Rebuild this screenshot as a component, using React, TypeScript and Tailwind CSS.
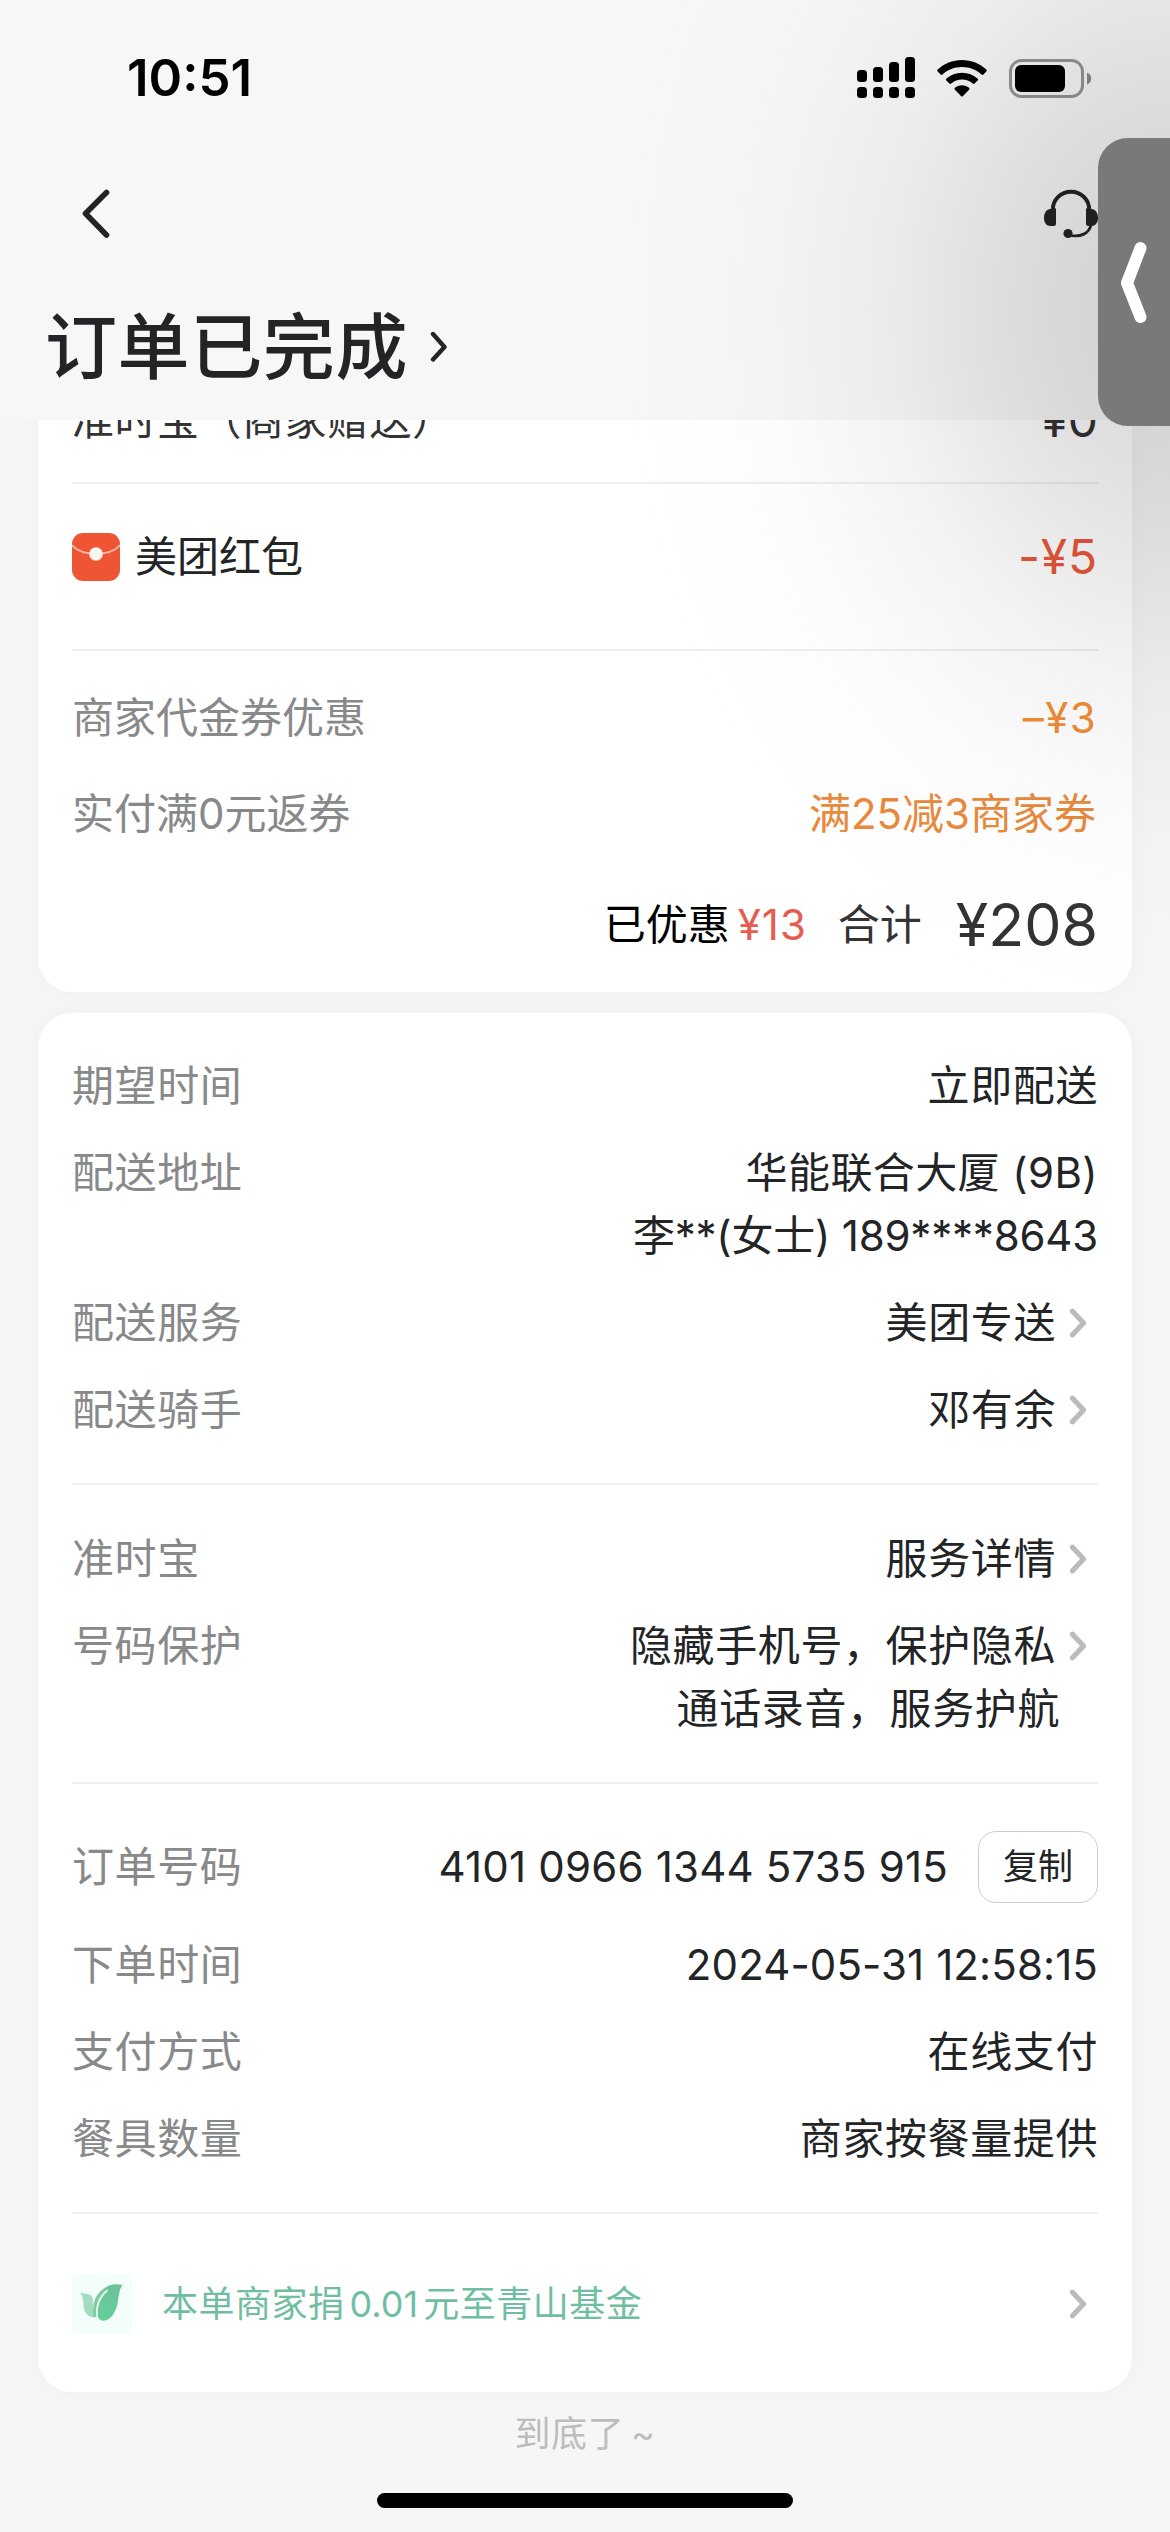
/**
 * @page OrderDetail
 * Completed takeaway order: price summary, delivery info and order info.
 */

import React from 'react';

const Chevron: React.FC<{ className?: string }> = ({ className }) => (
  <svg className={className} width="18" height="30" viewBox="0 0 18 30" fill="none">
    <path d="M3.500 3.200 L14.500 15 L3.500 26.800" stroke="currentColor" strokeWidth="5.200" strokeLinecap="round" strokeLinejoin="round" />
  </svg>
);

const SignalIcon = () => (
  <svg width="58" height="42" viewBox="0 0 58 42" fill="black">
    <rect x="0" y="13" width="10" height="12" rx="3.5" />
    <rect x="16" y="10" width="10" height="15" rx="3.5" />
    <rect x="32" y="5" width="10" height="20" rx="3.5" />
    <rect x="48" y="0" width="10" height="25" rx="3.5" />
    <rect x="0" y="30" width="10" height="11" rx="3.5" />
    <rect x="16" y="30" width="10" height="11" rx="3.5" />
    <rect x="32" y="30" width="10" height="11" rx="3.5" />
    <rect x="48" y="30" width="10" height="11" rx="3.5" />
  </svg>
);

const WifiIcon = () => (
  <svg width="50" height="37" viewBox="0 0 50 37" fill="black">
    <path d="M25 0 C15.5 0 7 3.6 0.7 9.6 Q-0.2 10.5 0.7 11.5 L3.6 14.5 Q4.5 15.4 5.5 14.5 C10.7 9.7 17.5 7 25 7 C32.5 7 39.3 9.7 44.5 14.5 Q45.5 15.4 46.4 14.5 L49.3 11.5 Q50.2 10.5 49.3 9.6 C43 3.6 34.5 0 25 0 Z" />
    <path d="M25 12.7 C19 12.7 13.5 14.9 9.3 18.7 Q8.4 19.6 9.3 20.5 L12.4 23.5 Q13.3 24.4 14.3 23.5 C17.2 21 20.9 19.6 25 19.6 C29.1 19.6 32.8 21 35.7 23.5 Q36.7 24.4 37.6 23.5 L40.7 20.5 Q41.6 19.6 40.7 18.7 C36.5 14.9 31 12.7 25 12.7 Z" />
    <path d="M25 25.3 C22.3 25.3 19.8 26.2 17.9 27.8 Q16.9 28.7 17.9 29.7 L24 36 Q25 37 26 36 L32.1 29.7 Q33.1 28.7 32.1 27.8 C30.2 26.2 27.7 25.3 25 25.3 Z" />
  </svg>
);

const BatteryIcon = () => (
  <svg width="83" height="39" viewBox="0 0 83 39" fill="none">
    <rect x="1.500" y="1.500" width="72" height="36" rx="11" stroke="black" strokeOpacity="0.400" strokeWidth="3" />
    <rect x="6" y="6" width="50" height="27" rx="6" fill="black" />
    <path d="M78 13.500 C80.600 14.500 82.200 16.800 82.200 19.500 C82.200 22.200 80.600 24.500 78 25.500 Z" fill="black" fillOpacity="0.450" />
  </svg>
);

const HeadsetIcon = () => (
  <svg width="54" height="50" viewBox="0 0 54 50" fill="none">
    <path d="M8.800 21 C8.800 10.500 17 2.700 27 2.700 C37 2.700 45.200 10.500 45.200 21" stroke="#222426" strokeWidth="4" />
    <path d="M12 19.500 V34.500 Q12 37 9.500 37 H6.500 C2.500 37 0 33.500 0 29 C0 24 2.500 20 6.500 20 L8.500 19 Z" fill="#222426" />
    <path d="M42 19.500 V34.500 Q42 37 44.500 37 H47.500 C51.500 37 54 33.500 54 29 C54 24 51.500 20 47.500 20 L45.500 19 Z" fill="#222426" />
    <path d="M47 36 C45 44 37.500 49 24 46" stroke="#222426" strokeWidth="2.800" />
    <circle cx="24" cy="44.500" r="4.600" fill="#222426" />
  </svg>
);

const RedPacketIcon = () => (
  <svg width="48" height="48" viewBox="0 0 48 48" fill="none">
    <rect width="48" height="48" rx="11" fill="#ee5535" />
    <path d="M0 12 C9 23.500 39 23.500 48 12" stroke="#fbb9a4" strokeWidth="2" />
    <circle cx="24" cy="21" r="6.800" fill="#fff5ef" />
  </svg>
);

const LeafIcon = () => (
  <svg width="60" height="60" viewBox="0 0 60 60" fill="none">
    <defs>
      <linearGradient id="leafFront" x1="0" y1="0" x2="0" y2="1">
        <stop offset="0" stopColor="#6fc299" />
        <stop offset="1" stopColor="#62cf9b" />
      </linearGradient>
    </defs>
    <rect width="60" height="60" rx="4" fill="#f3fdf9" />
    <path d="M8.300 18.500 C13 20.500 18 18.500 20.500 23.500 L21.700 43.500 C15 42.500 11.500 37 11.500 31 C11.500 26 10.500 22 8.300 18.500 Z" fill="#a3dcc0" />
    <path d="M36 12.500 C24 17 19.500 29 21.500 43.500 L25.500 42.500 L34 18 Z" fill="#7fcba6" />
    <path d="M50.700 11 C47.500 14 47 21 46 27 C44.500 38 38.500 46.700 31.500 46.700 C27 46.700 25 42.500 25.200 37 C25.500 29 30 22 33 18.500 L31.500 15.500 C36 10.500 43 9.500 50.700 11 Z" fill="url(#leafFront)" />
    <path d="M35 16.500 C28 22.500 24 32 25 42" stroke="#e9faf2" strokeWidth="1.700" strokeLinecap="round" />
  </svg>
);

const Divider: React.FC<{ className?: string }> = ({ className = '' }) => (
  <div className={`h-[2px] shrink-0 bg-[#efefef] ${className}`} />
);

interface InfoRowProps {
  label: string;
  lines: string[];
  lineClasses?: string[];
  arrow?: boolean;
}

const InfoRow: React.FC<InfoRowProps> = ({ label, lines, lineClasses = [], arrow }) => (
  <div className="flex justify-between leading-[63px]">
    <span className="tracking-[0.6px] text-[#88898a]">{label}</span>
    <div className="flex flex-col items-end tracking-[0.6px] text-[#222426]">
      <div className="flex items-center">
        <span className={lineClasses[0]}>{lines[0]}</span>
        {arrow && <Chevron className="ml-[13px] mr-[11px] text-[#bbbbbb]" />}
      </div>
      {lines.slice(1).map((line, i) => (
        <span key={line} className={arrow ? 'mr-[38px]' : lineClasses[i + 1]}>{line}</span>
      ))}
    </div>
  </div>
);

const Header = () => (
  <header className="flex h-[420px] shrink-0 flex-col bg-[#f7f7f7]">
    <div className="flex h-[156px] items-center justify-between pl-[127px] pr-[78px]">
      <span className="text-[51px] font-semibold text-black">10:51</span>
      <div className="flex items-center gap-[22px]">
        <SignalIcon />
        <WifiIcon />
        <BatteryIcon />
      </div>
    </div>
    <div className="flex h-[116px] items-center justify-between pl-[81px] pr-[72px]">
      <svg width="30" height="50" viewBox="0 0 30 50" fill="none">
        <path d="M25.500 3.500 L4.500 24.500 L25.500 46" stroke="#222426" strokeWidth="5.600" strokeLinecap="round" strokeLinejoin="round" />
      </svg>
      <HeadsetIcon />
    </div>
    <div className="flex h-[148px] items-center pl-[45px] pt-[2px] text-[#222426]">
      <h1 className="text-[72px] font-medium leading-[100px] tracking-[0.600px]">订单已完成</h1>
      <svg className="ml-[22px]" width="18" height="32" viewBox="0 0 18 32" fill="none">
        <path d="M3 3 L14.500 16 L3 28.500" stroke="currentColor" strokeWidth="4.400" strokeLinecap="round" strokeLinejoin="round" />
      </svg>
    </div>
  </header>
);

const PriceCard = () => (
  <section className="-mt-[40px] flex flex-col rounded-[34px] bg-white px-[34px] pb-[36px] pt-[9px] leading-[62px] shadow-[0_0_24px_rgba(0,0,0,0.03)]">
    <div className="flex justify-between pb-[31px] text-[#333333]">
      <span className="tracking-[0.500px]">准时宝（商家赠送）</span>
      <span className="text-[48px]">¥0</span>
    </div>
    <Divider />
    <div className="flex h-[145px] items-center justify-between">
      <div className="flex items-center gap-[15px] text-[#222426]">
        <RedPacketIcon />
        <span>美团红包</span>
      </div>
      <span className="text-[48px] tracking-[0.800px] text-[#e8573a]">-¥5</span>
    </div>
    <Divider className="mt-[20px]" />
    <div className="mt-[36px] flex justify-between">
      <span className="text-[#88898a]">商家代金券优惠</span>
      <span className="mr-[1px] tracking-[1.400px] text-[#f08d38]">–¥3</span>
    </div>
    <div className="mt-[34px] flex justify-between">
      <span className="text-[#88898a]">实付满0元返券</span>
      <span className="mr-[2px] text-[#e9893b]">满25减3商家券</span>
    </div>
    <div className="mt-[49px] flex items-center justify-end">
      <span className="text-black">已优惠</span>
      <span className="ml-[8px] tracking-[1px] text-[#e65c50]">¥13</span>
      <span className="ml-[31px] text-[#333333]">合计</span>
      <span className="ml-[34px] text-[59px] text-[#333333]">¥208</span>
    </div>
  </section>
);

const DetailCard = () => (
  <section className="mt-[21px] flex flex-col rounded-[34px] bg-white px-[34px] pb-[58px] pt-[41px] shadow-[0_0_24px_rgba(0,0,0,0.03)]">
    <div className="flex flex-col gap-[24px]">
      <InfoRow label="期望时间" lines={['立即配送']} />
      <InfoRow
        label="配送地址"
        lines={['华能联合大厦 (9B)', '李**(女士) 189****8643']}
        lineClasses={['tracking-[0.4px]', 'tracking-[-0.2px]']}
      />
      <InfoRow label="配送服务" lines={['美团专送']} arrow />
      <InfoRow label="配送骑手" lines={['邓有余']} arrow />
    </div>
    <Divider className="my-[42px]" />
    <div className="flex flex-col gap-[24px]">
      <InfoRow label="准时宝" lines={['服务详情']} arrow />
      <InfoRow label="号码保护" lines={['隐藏手机号，保护隐私', '通话录音，服务护航']} arrow />
    </div>
    <Divider className="mt-[42px]" />
    <div className="mt-[47px] flex h-[72px] items-center">
      <span className="pb-[2px] tracking-[0.600px] text-[#88898a]">订单号码</span>
      <span className="ml-auto pb-[2px] tracking-[0.200px] text-[#222426]">4101 0966 1344 5735 915</span>
      <button
        type="button"
        className="ml-[30px] flex h-[72px] w-[120px] items-center justify-center rounded-[18px] border border-[#cccccc] pb-[2px] text-[35px] text-[#222426]"
      >
        复制
      </button>
    </div>
    <div className="mt-[30px] flex flex-col gap-[24px]">
      <InfoRow label="下单时间" lines={['2024-05-31 12:58:15']} lineClasses={['tracking-[0.1px]']} />
      <InfoRow label="支付方式" lines={['在线支付']} />
      <InfoRow label="餐具数量" lines={['商家按餐量提供']} />
    </div>
    <Divider className="mt-[42px]" />
    <div className="mt-[60px] flex h-[60px] items-center">
      <LeafIcon />
      <span className="ml-[30px] text-[36px] tracking-[0.500px] text-[#70bea2]">
        本单商家捐<span className="mx-[5px] tracking-normal">0.01</span>元至青山基金
      </span>
      <Chevron className="ml-auto mr-[11px] text-[#bbbbbb]" />
    </div>
  </section>
);

// Wide soft shade behind the drawer handle, falls over the header and the cards
const HandleShade = () => (
  <div className="pointer-events-none absolute right-0 top-0 h-[1060px] w-[600px] bg-[radial-gradient(570px_740px_at_600px_310px,rgba(0,0,0,0.15)_0%,rgba(0,0,0,0.143)_10%,rgba(0,0,0,0.125)_20%,rgba(0,0,0,0.1)_30%,rgba(0,0,0,0.073)_40%,rgba(0,0,0,0.049)_50%,rgba(0,0,0,0.03)_60%,rgba(0,0,0,0.0165)_70%,rgba(0,0,0,0.008)_80%,rgba(0,0,0,0.003)_90%,rgba(0,0,0,0)_100%)]" />
);

const SideHandle = () => (
  <div className="absolute right-0 top-[138px] h-[288px] w-[72px] rounded-l-[30px] bg-[#797979]">
    <svg className="absolute left-[22px] top-[102px]" width="30" height="84" viewBox="0 0 30 84" fill="none">
      <path d="M20.500 8 L7 43 L20.500 77" stroke="white" strokeWidth="12" strokeLinecap="round" strokeLinejoin="round" />
    </svg>
  </div>
);

export default function App() {
  return (
    <div className="relative flex h-[2532px] w-[1170px] flex-col overflow-hidden bg-[#f6f6f6] font-['Inter','Noto_Sans_CJK_SC',sans-serif] text-[42px]">
      <Header />
      <main className="h-[2010px] shrink-0 overflow-hidden px-[38px]">
        <PriceCard />
        <DetailCard />
      </main>
      <footer className="relative -mt-[30px] flex flex-1 flex-col items-center pt-[10px]">
        <span className="text-[36px] leading-[48px] tracking-[0.600px] text-[#bdbdbd] [word-spacing:-4px]">到底了 ~</span>
        <div className="mt-[35px] h-[15px] w-[416px] rounded-full bg-black" />
      </footer>
      <HandleShade />
      <SideHandle />
    </div>
  );
}
